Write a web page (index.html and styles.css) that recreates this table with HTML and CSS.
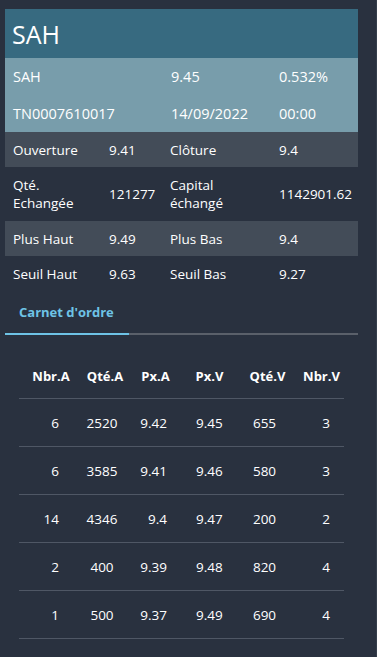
FILE: index.html
```html
<!DOCTYPE html>
<html lang="fr">
<head>
<meta charset="utf-8">
<title>SAH</title>
<link rel="stylesheet" href="styles.css">
</head>
<body>
<div class="page">
  <div class="card">
    <div class="title">SAH</div>
    <div class="quote">
      <div class="qrow"><span>SAH</span><span>9.45</span><span>0.532%</span></div>
      <div class="qrow"><span>TN0007610017</span><span>14/09/2022</span><span>00:00</span></div>
    </div>
    <div class="stats">
      <div class="srow shade"><span>Ouverture</span><span>9.41</span><span>Clôture</span><span>9.4</span></div>
      <div class="srow tall"><span>Qté.<br>Echangée</span><span>121277</span><span>Capital<br>échangé</span><span>1142901.62</span></div>
      <div class="srow shade"><span>Plus Haut</span><span>9.49</span><span>Plus Bas</span><span>9.4</span></div>
      <div class="srow"><span>Seuil Haut</span><span>9.63</span><span>Seuil Bas</span><span>9.27</span></div>
    </div>
    <div class="tabs">
      <div class="tab active">Carnet d'ordre</div>
    </div>
    <div class="book">
      <div class="brow head">
        <div class="c1">Nbr.A</div><div class="c2">Qté.A</div><div class="c3">Px.A</div><div class="c4">Px.V</div><div class="c5">Qté.V</div><div class="c6">Nbr.V</div>
      </div>
      <div class="brow">
        <div class="c1">6</div><div class="c2">2520</div><div class="c3">9.42</div><div class="c4">9.45</div><div class="c5">655</div><div class="c6">3</div>
      </div>
      <div class="brow">
        <div class="c1">6</div><div class="c2">3585</div><div class="c3">9.41</div><div class="c4">9.46</div><div class="c5">580</div><div class="c6">3</div>
      </div>
      <div class="brow">
        <div class="c1">14</div><div class="c2">4346</div><div class="c3">9.4</div><div class="c4">9.47</div><div class="c5">200</div><div class="c6">2</div>
      </div>
      <div class="brow">
        <div class="c1">2</div><div class="c2">400</div><div class="c3">9.39</div><div class="c4">9.48</div><div class="c5">820</div><div class="c6">4</div>
      </div>
      <div class="brow">
        <div class="c1">1</div><div class="c2">500</div><div class="c3">9.37</div><div class="c4">9.49</div><div class="c5">690</div><div class="c6">4</div>
      </div>
    </div>
  </div>
</div>
</body>
</html>
```
FILE: styles.css
```css
html, body {
  margin: 0;
  padding: 0;
  background: #29313f;
}
body {
  font-family: "Open Sans", "Noto Sans", sans-serif;
  color: #ffffff;
  min-height: 657px;
  border-right: 1px solid #353e4b;
  box-sizing: border-box;
}
.page {
  padding: 9px 19px 0 5px;
}
.card {
  width: 353px;
}
.title {
  background: #376a80;
  height: 49px;
  box-sizing: border-box;
  padding: 9px 0 0 7px;
  font-size: 25px;
  line-height: 32px;
}
.quote {
  background: #789dab;
}
.qrow {
  display: grid;
  grid-template-columns: 158px 108px 1fr;
  height: 37px;
  align-items: center;
  padding-left: 8px;
  font-size: 14.5px;
}
.srow {
  display: grid;
  grid-template-columns: 96px 61px 109px 1fr;
  align-items: center;
  height: 35px;
  padding-left: 8px;
  font-size: 13.5px;
  line-height: 18px;
}
.srow.tall {
  height: 54px;
}
.shade {
  background: #434c58;
}
.tabs {
  margin-top: 6px;
  display: flex;
  border-bottom: 2px solid #5a606a;
  height: 36px;
}
.tab {
  width: 124px;
  box-sizing: border-box;
  padding-left: 14px;
  font-size: 13px;
  font-weight: 700;
  line-height: 31px;
  color: #6ec3e6;
}
.tab.active {
  border-bottom: 2px solid #6ec3e6;
  margin-bottom: -2px;
}
.book {
  margin: 19px 14px 0 14px;
}
.brow {
  display: grid;
  grid-template-columns: 64px 44px 57px 51px 65px 43px;
  height: 47px;
  align-items: center;
  border-bottom: 1px solid #4f5765;
  font-size: 13.5px;
}
.brow.head {
  height: 44px;
  font-weight: 700;
  font-size: 13px;
}
.brow.head > div {
  text-align: center;
  padding: 0;
}
.c1 { text-align: right; padding-right: 24px; }
.c2 { text-align: center; padding-right: 6px; }
.c3 { text-align: right; padding-right: 17px; }
.c4 { text-align: left; padding-left: 12px; }
.c5 { text-align: center; padding-right: 6px; }
.c6 { text-align: center; padding-left: 9px; }
```
